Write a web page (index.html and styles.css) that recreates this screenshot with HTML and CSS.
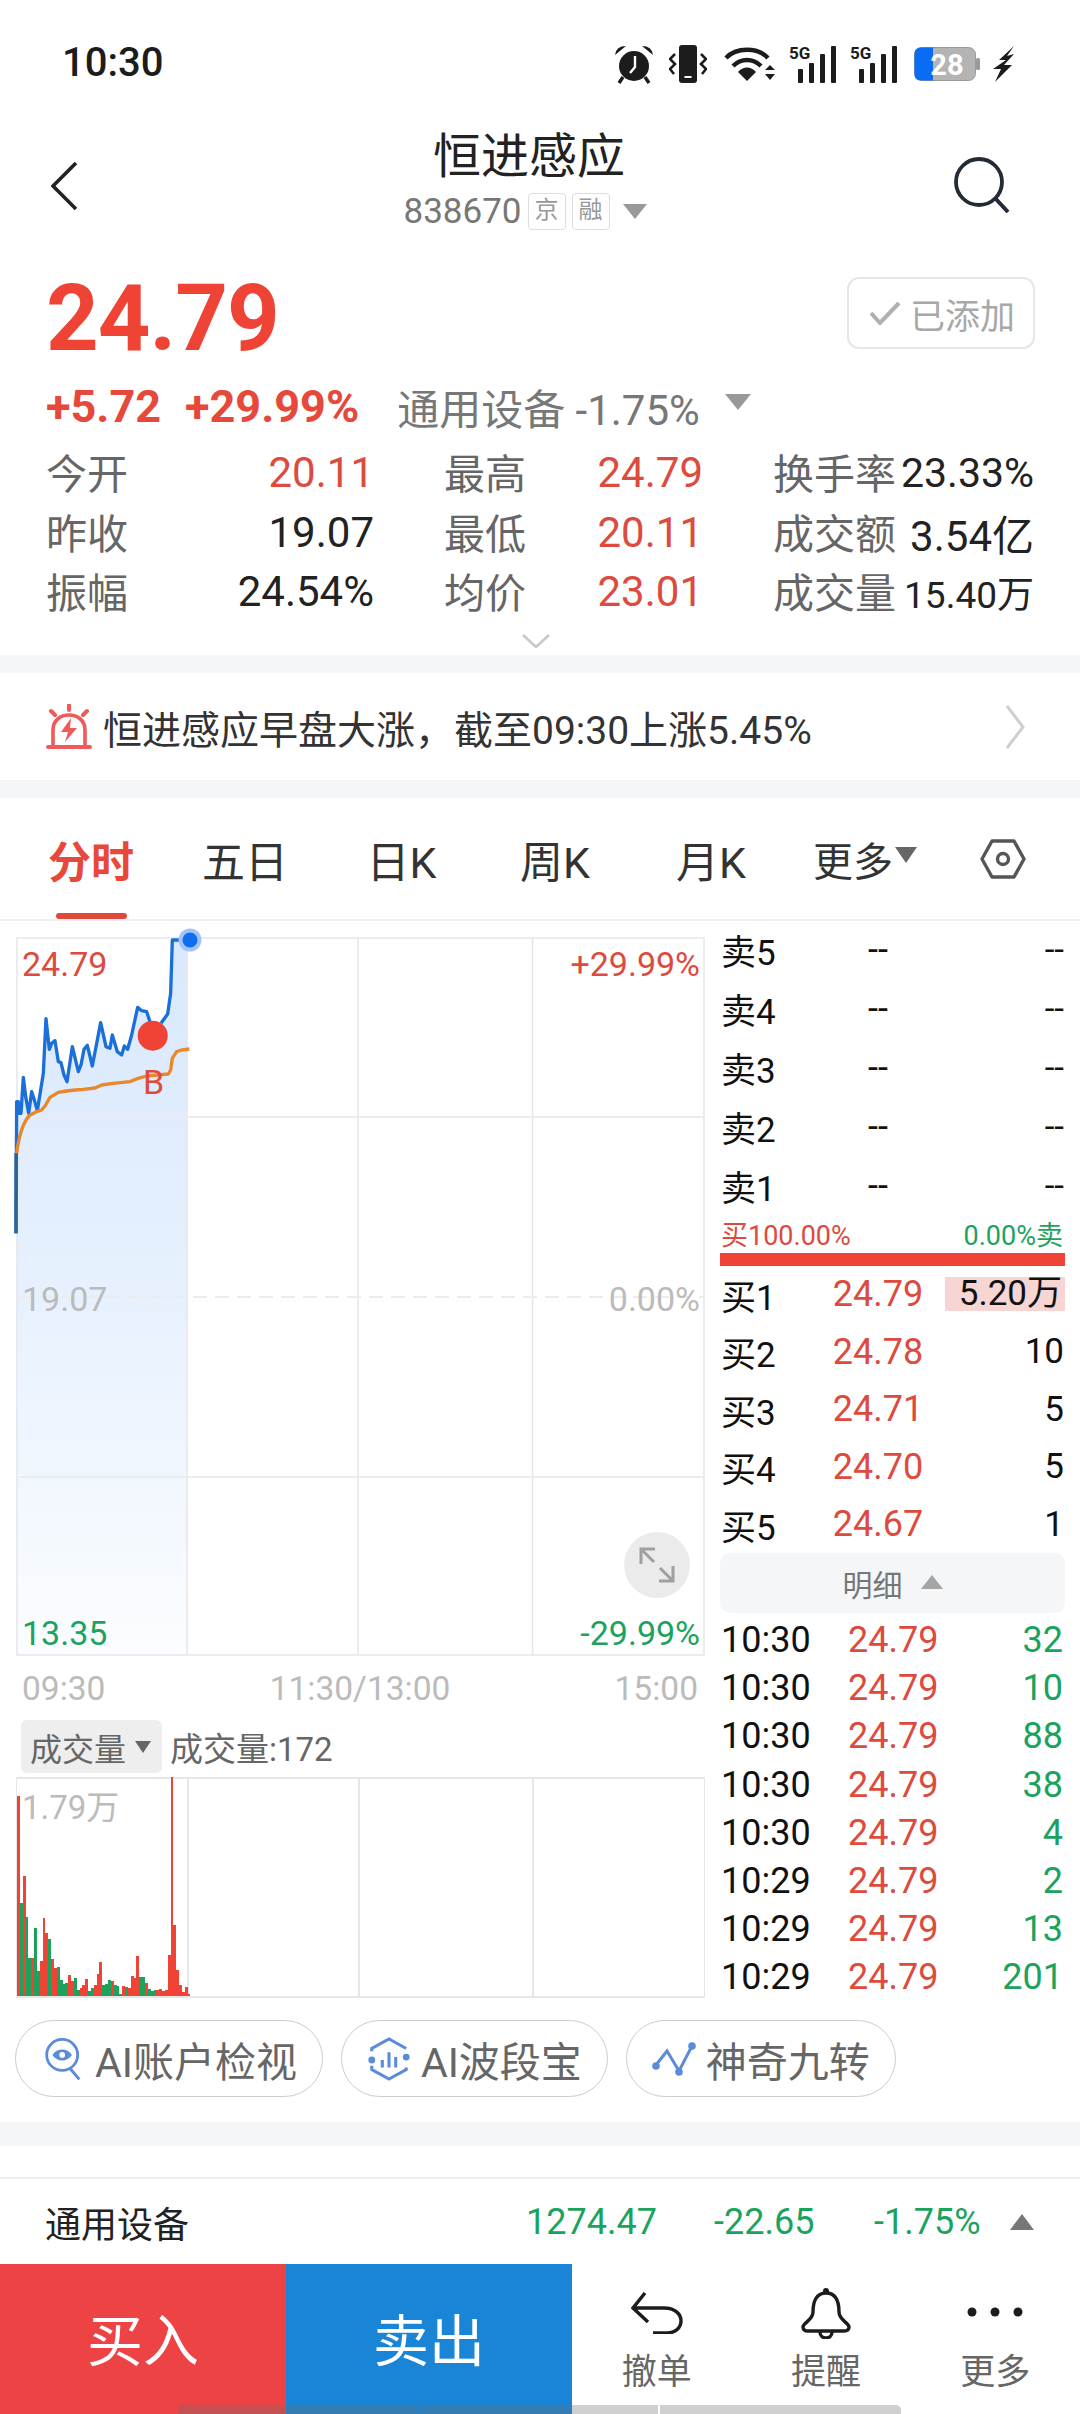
FILE: index.html
```html
<!DOCTYPE html>
<html lang="zh-CN">
<head>
    <meta charset="UTF-8">
    <meta name="viewport" content="width=device-width, initial-scale=1.0">
    <title>恒进感应 838670</title>
    <link rel="stylesheet" href="styles.css">
</head>
<body>
    <div class="page">
        <div class="status-bar">
            <span class="status-time">10:30</span>
            <div class="status-icons">
                <svg class="ic-alarm" viewBox="0 0 40 40"><circle cx="20" cy="22" r="15" fill="#1c1c1c"/><path d="M1 11 Q2 2 12 2 Z M39 11 Q38 2 28 2 Z" fill="#1c1c1c"/><path d="M9 33 L5 39 M31 33 L35 39" stroke="#1c1c1c" stroke-width="3.400"/><path d="M21 12 V23 L16 29" fill="none" stroke="#fff" stroke-width="2.400"/></svg>
                <svg class="ic-vibrate" viewBox="0 0 38 40"><rect x="10" y="1" width="18" height="38" rx="3" fill="#1c1c1c"/><rect x="15.500" y="32" width="7" height="2" fill="#fff"/><path d="M6 10 L1 15 L6 20 L1 25 L5 30 M32 10 L37 15 L32 20 L37 25 L33 30" fill="none" stroke="#1c1c1c" stroke-width="2.600"/></svg>
                <svg class="ic-wifi" viewBox="0 0 52 36"><path d="M2 12 C12 1 34 1 44 12 M9 20 C17 12 29 12 37 20" fill="none" stroke="#1c1c1c" stroke-width="4.400"/><path d="M14 26 C19 20 27 20 32 26 L23 35 Z" fill="#1c1c1c"/><path d="M41 24 L46 19 L51 24 Z M41 28 L51 28 L46 34 Z" fill="#1c1c1c"/></svg>
                <svg class="ic-signal" viewBox="0 0 48 38"><text x="0" y="14" class="ic-5g">5G</text><rect x="9" y="24" width="5" height="14" rx="1"/><rect x="20" y="18" width="5" height="20" rx="1"/><rect x="31" y="9" width="5" height="29" rx="1"/><rect x="42" y="1" width="5" height="37" rx="1"/></svg>
                <svg class="ic-signal" viewBox="0 0 48 38"><text x="0" y="14" class="ic-5g">5G</text><rect x="9" y="24" width="5" height="14" rx="1"/><rect x="20" y="18" width="5" height="20" rx="1"/><rect x="31" y="9" width="5" height="29" rx="1"/><rect x="42" y="1" width="5" height="37" rx="1"/></svg>
                <svg class="ic-battery" viewBox="0 0 66 34"><rect x="0.500" y="0.500" width="61" height="33" rx="7" fill="#b4b4b4" stroke="#999"/><path d="M7 0.500 H19 V33.500 H7 Q0.500 33.500 0.500 27 V7 Q0.500 0.500 7 0.500 Z" fill="#0a6cf5"/><rect x="62" y="11" width="4" height="12" rx="1.500" fill="#999"/><text x="33" y="28" text-anchor="middle" class="ic-batt-num">28</text></svg>
                <svg class="ic-bolt" viewBox="0 0 22 36"><path d="M21 0 L6 14 L13 14 L0 23 L8 23 L2 36 L19 19 L11 19 L21 8 L14 10 Z" fill="#1c1c1c"/></svg>
            </div>
        </div>

        <div class="stock-header">
            <div class="nav-left">
                <svg class="ic-back" viewBox="0 0 26 48"><path d="M25 1 L2 24 L25 47" fill="none" stroke="#222" stroke-width="3.600"/></svg>
            </div>
            <div class="stock-title">
                <div class="stock-name">恒进感应</div>
                <div class="stock-code">
                    <span>838670</span>
                    <span class="code-tag">京</span>
                    <span class="code-tag">融</span>
                    <span class="tri-down tri-code"></span>
                </div>
            </div>
            <div class="nav-right">
                <svg class="ic-search" viewBox="0 0 56 56"><circle cx="25" cy="25" r="23" fill="none" stroke="#222b36" stroke-width="3.800"/><path d="M41 41 L54 55" stroke="#222b36" stroke-width="4"/></svg>
            </div>
        </div>

        <div class="quote">
            <div class="price-row">
                <span class="price">24.79</span>
                <span class="added-btn">
                    <svg class="ic-check" viewBox="0 0 32 24"><path d="M2 12 L11 22 L30 2" fill="none" stroke="#b0b0b0" stroke-width="4"/></svg>
                    已添加
                </span>
            </div>
            <div class="change-row">
                <span class="chg">+5.72</span>
                <span class="chg chg-pct">+29.99%</span>
                <span class="sector">通用设备 -1.75%</span>
                <span class="tri-down tri-sector"></span>
            </div>
            <div class="stats">
                <div class="stat"><span class="stat-label">今开</span><span class="up">20.11</span></div>
                <div class="stat"><span class="stat-label">最高</span><span class="up">24.79</span></div>
                <div class="stat"><span class="stat-label">换手率</span><span class="val-41">23.33%</span></div>
                <div class="stat"><span class="stat-label">昨收</span><span>19.07</span></div>
                <div class="stat"><span class="stat-label">最低</span><span class="up">20.11</span></div>
                <div class="stat"><span class="stat-label">成交额</span><span>3.54亿</span></div>
                <div class="stat"><span class="stat-label">振幅</span><span>24.54%</span></div>
                <div class="stat"><span class="stat-label">均价</span><span class="up">23.01</span></div>
                <div class="stat"><span class="stat-label">成交量</span><span class="val-37">15.40万</span></div>
            </div>
            <div class="expand-row">
                <svg class="ic-expand" viewBox="0 0 28 14"><path d="M1 1 L14 13 L27 1" fill="none" stroke="#c8c8c8" stroke-width="2.600"/></svg>
            </div>
        </div>

        <div class="section-gap"></div>

        <div class="alert">
            <svg class="ic-siren" viewBox="0 0 48 46"><path d="M8 42 V26 C8 6 40 6 40 26 V42" fill="none" stroke="#f05a5a" stroke-width="3.600"/><rect x="1" y="41" width="46" height="4" rx="2" fill="#f05a5a"/><path d="M26 14 L16 28 H23 L20 38 L32 24 H25 Z" fill="#f05a5a"/><path d="M24 1 V6 M6 7 L10 11 M42 7 L38 11" stroke="#f05a5a" stroke-width="4" stroke-linecap="round"/></svg>
            <span class="alert-text">恒进感应早盘大涨，截至09:30上涨5.45%</span>
            <svg class="ic-more" viewBox="0 0 20 46"><path d="M2 2 L18 23 L2 44" fill="none" stroke="#cfcfcf" stroke-width="3"/></svg>
        </div>

        <div class="section-gap"></div>

        <div class="tabs">
            <span class="tab tab-on">分时</span>
            <span class="tab">五日</span>
            <span class="tab">日K</span>
            <span class="tab">周K</span>
            <span class="tab">月K</span>
            <span class="tab tab-more">更多<i class="tri-down tri-tab"></i></span>
            <span class="tab">
                <svg class="ic-hex" viewBox="0 0 46 40"><path d="M12 2 H34 L44 20 L34 38 H12 L2 20 Z" fill="none" stroke="#555" stroke-width="3.400" stroke-linejoin="round"/><circle cx="23" cy="20" r="5.500" fill="none" stroke="#555" stroke-width="3.400"/></svg>
            </span>
        </div>

        <div class="market">
            <div class="market-left">
                <div class="chart">
                    <svg class="chart-svg" viewBox="0 0 689 719">
                        <defs>
                            <linearGradient id="areaFill" x1="0" y1="0" x2="0" y2="1">
                                <stop offset="0" stop-color="#d9e8fd"/>
                                <stop offset="0.500" stop-color="#e7f1fe"/>
                                <stop offset="1" stop-color="#fbfdff"/>
                            </linearGradient>
                        </defs>
                        <g transform="translate(-16,-17) scale(0.3333)">
                            <path fill="url(#areaFill)" d="M50 545 L55 545 58 580 63 580 70 472 77 530 86 580 95 515 103 540 112 572 122 510 130 460 138 296 148 388 155 370 165 362 175 425 183 428 192 465 201 485 217 380 235 455 243 435 252 388 262 376 277 438 302 308 318 380 330 385 337 345 352 395 365 405 373 378 383 388 395 345 413 262 425 272 440 275 450 305 483 310 503 282 512 220 517 60 562 60 562 2208 48 2208 Z"/>
                        </g>
                        <g class="grid">
                            <path d="M1 1 H688 V718 H1 Z" fill="none"/>
                            <path d="M171 1 V718 M342 1 V718 M516.500 1 V718"/>
                            <path class="grid-h" d="M1 180 H688 M1 540 H688"/>
                            <path class="grid-h grid-dash" d="M1 360 H688"/>
                        </g>
                        <g transform="translate(-16,-17) scale(0.3333)" fill="none" stroke-width="10" stroke-linejoin="round">
                            <path stroke="#1a6fd8" d="M48 940 L50 545 55 545 58 580 63 580 70 472 77 530 86 580 95 515 103 540 112 572 122 510 130 460 138 296 148 388 155 370 165 362 175 425 183 428 192 465 201 485 217 380 235 455 243 435 252 388 262 376 277 438 302 308 318 380 330 385 337 345 352 395 365 405 373 378 383 388 395 345 413 262 425 272 440 275 450 305 M483 310 L503 282 512 220 517 60 570 60"/>
                            <path stroke="#2a6499" d="M48 940 V700"/>
                            <path stroke="#e8872b" d="M50 700 C55 660 65 610 90 585 L110 575 125 570 135 558 150 532 175 517 200 513 225 510 250 508 285 504 305 495 340 490 390 485 415 475 440 468 505 462 512 450 517 415 530 395 545 390 568 387"/>
                        </g>
                        <circle cx="174" cy="3" r="11.500" fill="#a3c3fa"/>
                        <circle cx="174" cy="3" r="7.500" fill="#0f6ef0"/>
                        <circle cx="136.700" cy="98.700" r="15" fill="#ee4335"/>
                    </svg>
                    <span class="chart-b">B</span>
                    <span class="axis axis-tl up">24.79</span>
                    <span class="axis axis-tr up">+29.99%</span>
                    <span class="axis axis-ml">19.07</span>
                    <span class="axis axis-mr">0.00%</span>
                    <span class="axis axis-bl down">13.35</span>
                    <span class="axis axis-br down">-29.99%</span>
                    <span class="zoom-btn">
                        <svg viewBox="0 0 36 36"><path d="M2 17 V2 H16 M2 2 L15 15 M34 19 V34 H20 M34 34 L21 21" fill="none" stroke="#a0a0a0" stroke-width="3"/></svg>
                    </span>
                </div>
                <div class="time-axis">
                    <span>09:30</span>
                    <span>11:30/13:00</span>
                    <span>15:00</span>
                </div>
                <div class="vol-head">
                    <span class="vol-select">成交量<i class="tri-down tri-vol"></i></span>
                    <span class="vol-text">成交量:172</span>
                </div>
                <div class="vol-chart">
                    <i class="vol-line vol-line-1"></i>
                    <i class="vol-line vol-line-2"></i>
                    <i class="vol-line vol-line-3"></i>
                    <div class="vol-bars" id="volBars"></div>
                    <span class="vol-max">1.79万</span>
                </div>
            </div>

            <div class="market-right">
                <div class="book-row ask"><span>卖5</span><span class="book-price">--</span><span class="book-qty">--</span></div>
                <div class="book-row ask"><span>卖4</span><span class="book-price">--</span><span class="book-qty">--</span></div>
                <div class="book-row ask"><span>卖3</span><span class="book-price">--</span><span class="book-qty">--</span></div>
                <div class="book-row ask"><span>卖2</span><span class="book-price">--</span><span class="book-qty">--</span></div>
                <div class="book-row ask"><span>卖1</span><span class="book-price">--</span><span class="book-qty">--</span></div>
                <div class="ratio"><span class="up">买100.00%</span><span class="down">0.00%卖</span></div>
                <div class="ratio-bar"></div>
                <div class="book-row bid"><span>买1</span><span class="book-price up">24.79</span><span class="book-qty qty-hot">5.20万</span></div>
                <div class="book-row bid"><span>买2</span><span class="book-price up">24.78</span><span class="book-qty">10</span></div>
                <div class="book-row bid"><span>买3</span><span class="book-price up">24.71</span><span class="book-qty">5</span></div>
                <div class="book-row bid"><span>买4</span><span class="book-price up">24.70</span><span class="book-qty">5</span></div>
                <div class="book-row bid"><span>买5</span><span class="book-price up">24.67</span><span class="book-qty">1</span></div>
                <div class="detail-head">明细<i class="tri-up tri-detail"></i></div>
                <div class="trade"><span>10:30</span><span class="up">24.79</span><span class="down">32</span></div>
                <div class="trade"><span>10:30</span><span class="up">24.79</span><span class="down">10</span></div>
                <div class="trade"><span>10:30</span><span class="up">24.79</span><span class="down">88</span></div>
                <div class="trade"><span>10:30</span><span class="up">24.79</span><span class="down">38</span></div>
                <div class="trade"><span>10:30</span><span class="up">24.79</span><span class="down">4</span></div>
                <div class="trade"><span>10:29</span><span class="up">24.79</span><span class="down">2</span></div>
                <div class="trade"><span>10:29</span><span class="up">24.79</span><span class="down">13</span></div>
                <div class="trade"><span>10:29</span><span class="up">24.79</span><span class="down">201</span></div>
            </div>
        </div>

        <div class="pills">
            <span class="pill">
                <svg class="pill-icon" viewBox="0 0 44 54"><circle cx="21" cy="22" r="19" fill="none" stroke="#5b8bd9" stroke-width="3.400"/><path d="M9 22 C15 13 27 13 33 22 C27 31 15 31 9 22 Z" fill="#5b8bd9"/><circle cx="21" cy="22" r="3.500" fill="#fff"/><path d="M31 39 L42 52" stroke="#5b8bd9" stroke-width="3.600"/></svg>
                AI账户检视
            </span>
            <span class="pill">
                <svg class="pill-icon" viewBox="0 0 44 46"><path d="M4 15 V12 L22 2 L40 12 M40 32 V34 L22 44 L4 34 V30" fill="none" stroke="#5b8bd9" stroke-width="3.200"/><circle cx="40" cy="21" r="3.600" fill="#5b8bd9"/><circle cx="4" cy="24" r="3.600" fill="#5b8bd9"/><path d="M15 24 V32 M22 16 V32 M29 21 V32" stroke="#5b8bd9" stroke-width="3.200"/></svg>
                AI波段宝
            </span>
            <span class="pill">
                <svg class="pill-icon" viewBox="0 0 44 40"><path d="M4 26 L15 12 L27 32 L40 7" fill="none" stroke="#5b8bd9" stroke-width="3"/><circle cx="4" cy="27" r="3.800" fill="#5b8bd9"/><circle cx="27" cy="33" r="3.800" fill="#5b8bd9"/><circle cx="40" cy="7" r="3.800" fill="#5b8bd9"/></svg>
                神奇九转
            </span>
        </div>

        <div class="section-gap gap-wide"></div>

        <div class="sector-row">
            <span class="sector-name">通用设备</span>
            <span class="sector-num">1274.47</span>
            <span class="sector-num">-22.65</span>
            <span class="sector-num">-1.75%</span>
            <i class="tri-up tri-sector-up"></i>
        </div>

        <div class="action-bar">
            <span class="trade-btn buy-btn">买入</span>
            <span class="trade-btn sell-btn">卖出</span>
            <div class="tool">
                <svg class="ic-undo" viewBox="0 0 52 42"><path d="M14 1 L2 16 L17 30 M2 16 H33 C44 16 50 22 50 29 C50 36 44 41 36 41 H22" fill="none" stroke="#1c1c1c" stroke-width="3.400"/></svg>
                <span>撤单</span>
            </div>
            <div class="tool">
                <svg class="ic-bell" viewBox="0 0 50 52"><path d="M25 6 C35 6 38 15 38 25 C38 33 48 36 48 40 C48 43 46 44 43 44 H7 C4 44 2 43 2 40 C2 36 12 33 12 25 C12 15 15 6 25 6 Z" fill="none" stroke="#1c1c1c" stroke-width="3.400"/><circle cx="25" cy="4" r="3" fill="#1c1c1c"/><path d="M19 45 C19 53 31 53 31 45" fill="none" stroke="#1c1c1c" stroke-width="3.400"/></svg>
                <span>提醒</span>
            </div>
            <div class="tool">
                <svg class="ic-dots" viewBox="0 0 56 10"><circle cx="5" cy="5" r="4.500"/><circle cx="28" cy="5" r="4.500"/><circle cx="51" cy="5" r="4.500"/></svg>
                <span>更多</span>
            </div>
        </div>

        <div class="gesture-bar">
            <i class="gesture-part gesture-a"></i>
            <i class="gesture-part gesture-b"></i>
            <i class="gesture-part gesture-c"></i>
        </div>
    </div>

    <script src="script.js"></script>
</body>
</html>
```
FILE: styles.css
```css
* {
    margin: 0;
    padding: 0;
    box-sizing: border-box;
}

body {
    background: #fff;
    font-family: Roboto, "Noto Sans CJK SC", sans-serif;
    color: #222;
}

i {
    font-style: normal;
}

svg {
    display: block;
    flex: none;
}

.page {
    position: relative;
    width: 1080px;
    height: 2414px;
    overflow: hidden;
    background: #fff;
}

.up {
    color: #dd4a3e;
}

.down {
    color: #1ba35e;
}

.tri-down,
.tri-up {
    display: inline-block;
    width: 0;
    height: 0;
    border-style: solid;
    border-color: transparent;
}

.section-gap {
    height: 18px;
    background: #f5f6f8;
}

.gap-wide {
    height: 24px;
}

/* status bar */
.status-bar {
    height: 124px;
    padding: 0 64px 0 62px;
    display: flex;
    align-items: center;
    justify-content: space-between;
}

.status-time {
    font-size: 40px;
    font-weight: 500;
    color: #1c1c1c;
}

.status-icons {
    display: flex;
    align-items: center;
    margin-top: 3px;
    margin-right: 1px;
}

.ic-alarm {
    width: 40px;
    height: 40px;
}

.ic-vibrate {
    width: 38px;
    height: 40px;
    margin-left: 15px;
}

.ic-wifi {
    width: 52px;
    height: 36px;
    margin-left: 17px;
}

.ic-signal {
    width: 48px;
    height: 38px;
    margin-left: 13px;
    fill: #1c1c1c;
    overflow: visible;
}

.ic-5g {
    font-size: 17px;
    font-weight: 700;
}

.ic-battery {
    width: 66px;
    height: 34px;
    margin-left: 16px;
    overflow: visible;
}

.ic-batt-num {
    font-size: 29px;
    font-weight: 700;
    fill: #fff;
}

.ic-bolt {
    width: 22px;
    height: 36px;
    margin-left: 13px;
}

/* title */
.stock-header {
    height: 116px;
    display: grid;
    grid-template-columns: 178px 1fr 200px;
    align-items: center;
}

.nav-left {
    padding: 8px 0 0 51px;
}

.nav-right {
    display: flex;
    justify-content: flex-end;
    padding: 6px 70px 0 0;
}

.ic-back {
    width: 26px;
    height: 48px;
}

.ic-search {
    width: 56px;
    height: 56px;
}

.stock-title {
    text-align: center;
}

.stock-name {
    font-size: 48px;
    line-height: 58px;
    margin-top: -5px;
}

.stock-code {
    display: flex;
    align-items: center;
    justify-content: center;
    height: 40px;
    margin-top: 5px;
    margin-left: -8px;
    font-size: 35px;
    color: #777;
}

.code-tag {
    width: 38px;
    height: 37px;
    margin-left: 6px;
    border: 1.5px solid #ddd;
    border-radius: 4px;
    font-size: 24px;
    line-height: 33px;
    color: #999;
    text-align: center;
}

.tri-code {
    margin-left: 13px;
    border-width: 15px 12px 0;
    border-top-color: #999;
}

/* quote */
.quote {
    padding: 37px 45px 0 46px;
    height: 415px;
}

.price-row {
    height: 72px;
    display: flex;
    align-items: center;
    justify-content: space-between;
}

.price {
    padding-top: 12px;
    font-size: 92px;
    font-weight: 700;
    line-height: 72px;
    color: #ee4335;
    letter-spacing: -1px;
}

.added-btn {
    width: 188px;
    height: 72px;
    border: 2px solid #e6e6e6;
    border-radius: 12px;
    display: flex;
    align-items: center;
    padding-left: 20px;
    font-size: 35px;
    color: #a8a8a8;
}

.ic-check {
    width: 32px;
    height: 24px;
    margin-right: 9px;
}

.change-row {
    height: 60px;
    margin-top: 27px;
    display: flex;
    align-items: center;
}

.chg {
    font-size: 45px;
    font-weight: 700;
    color: #e6483b;
}

.chg-pct {
    margin-left: 24px;
}

.sector {
    margin-left: 38px;
    font-size: 42px;
    color: #777;
}

.tri-sector {
    margin-left: 25px;
    margin-top: -8px;
    border-width: 16px 13px 0;
    border-top-color: #999;
}

.stats {
    margin-top: 7px;
    display: grid;
    grid-template-columns: 328px 259px 261px;
    column-gap: 70px;
    grid-auto-rows: 59.500px;
}

.stat {
    display: flex;
    align-items: center;
    justify-content: space-between;
    font-size: 42px;
    white-space: nowrap;
}

.stat-label {
    margin-top: -3px;
    color: #666;
    font-size: 41px;
}

.val-41 {
    font-size: 41px;
}

.val-37 {
    font-size: 37px;
}

.expand-row {
    display: flex;
    justify-content: center;
    margin-top: 12px;
    margin-left: -10px;
}

.ic-expand {
    width: 28px;
    height: 14px;
}

/* alert */
.alert {
    height: 107px;
    display: flex;
    align-items: center;
    padding: 0 55px 0 45px;
}

.ic-siren {
    width: 48px;
    height: 46px;
}

.alert-text {
    margin-left: 10px;
    font-size: 39px;
    white-space: nowrap;
    color: #333;
}

.ic-more {
    width: 20px;
    height: 46px;
    margin-left: auto;
}

/* tabs */
.tabs {
    height: 123px;
    display: grid;
    grid-template-columns: 150px 158px 155px 152px 160px 148px 128px;
    padding-left: 16px;
    border-bottom: 2px solid #eee;
    align-items: center;
}

.tab {
    display: flex;
    align-items: center;
    justify-content: center;
    font-size: 43px;
    color: #333;
}

.tab-more {
    font-size: 40px;
}

.tab-on {
    position: relative;
    height: 100%;
    font-weight: 700;
    color: #e8483a;
}

.tab-on::after {
    content: "";
    position: absolute;
    left: 40px;
    bottom: 0;
    width: 71px;
    height: 6px;
    border-radius: 3px;
    background: #e0483c;
}

.tri-tab {
    margin-left: 2px;
    margin-top: -8px;
    border-width: 16px 11px 0;
    border-top-color: #666;
}

.ic-hex {
    width: 46px;
    height: 40px;
}

/* chart and order book */
.market {
    height: 1099px;
    display: flex;
}

.market-left {
    width: 720px;
    padding: 16px 0 0 16px;
}

.chart {
    position: relative;
    width: 689px;
    height: 719px;
}

.chart-svg {
    width: 689px;
    height: 719px;
    overflow: visible;
}

.grid {
    stroke: #e6e6ea;
    stroke-width: 1.500;
}

.grid-h {
    stroke: #ececf0;
    stroke-width: 2;
}

.grid-dash {
    stroke-dasharray: 14 8;
}

.chart-b {
    position: absolute;
    left: 127px;
    top: 125px;
    font-size: 34px;
    line-height: 40px;
    color: #dd4a3e;
}

.axis {
    position: absolute;
    font-size: 34px;
    line-height: 40px;
}

.axis-tl {
    left: 6px;
    top: 7px;
}

.axis-tr {
    right: 5px;
    top: 7px;
}

.axis-ml {
    left: 6px;
    top: 342px;
    color: #bbb;
}

.axis-mr {
    right: 5px;
    top: 342px;
    color: #bbb;
}

.axis-bl {
    left: 6px;
    top: 676px;
}

.axis-br {
    right: 5px;
    top: 676px;
}

.zoom-btn {
    position: absolute;
    left: 608px;
    top: 595px;
    width: 66px;
    height: 66px;
    border-radius: 50%;
    background: #ebebeb;
    display: flex;
    align-items: center;
    justify-content: center;
}

.zoom-btn svg {
    width: 36px;
    height: 36px;
}

.time-axis {
    height: 64px;
    padding: 0 7px 0 6px;
    width: 689px;
    display: flex;
    align-items: center;
    justify-content: space-between;
    font-size: 33.500px;
    color: #bbb;
}

.vol-head {
    height: 53px;
    display: flex;
    align-items: center;
}

.vol-select {
    width: 141px;
    height: 53px;
    margin-left: 5px;
    padding-left: 9px;
    display: flex;
    align-items: center;
    background: #eee;
    border-radius: 6px;
    font-size: 32px;
    color: #666;
}

.tri-vol {
    margin-left: 9px;
    border-width: 12px 8px 0;
    border-top-color: #666;
}

.vol-text {
    margin-left: 8px;
    font-size: 33px;
    color: #666;
}

.vol-chart {
    position: relative;
    width: 689px;
    height: 221px;
    margin-top: 4px;
    border: 1.500px solid #e6e6ea;
    border-width: 2px 1.500px;
}

.vol-line {
    position: absolute;
    top: 0;
    bottom: 0;
    width: 1.500px;
    background: #e6e6ea;
}

.vol-line-1 {
    left: 170px;
}

.vol-line-2 {
    left: 341px;
}

.vol-line-3 {
    left: 515px;
}

.vol-max {
    position: absolute;
    left: 5px;
    top: 9px;
    font-size: 33px;
    line-height: 40px;
    color: #bbb;
}

.vol-bars {
    position: absolute;
    left: 0;
    bottom: 0;
    display: flex;
    align-items: flex-end;
}

.vol-bar {
    width: 2.850px;
    flex: none;
}

.bar-up {
    background: #ee4335;
}

.bar-down {
    background: #1ba35e;
}

.market-right {
    width: 345px;
    margin-top: -1px;
    color: #111;
}

.book-row {
    display: grid;
    grid-template-columns: 88px 140px 1fr;
    align-items: center;
    font-size: 35px;
}

.book-row > :first-child {
    padding-left: 1px;
}

.ask {
    height: 59px;
}

.bid {
    height: 57.500px;
}

.book-price {
    text-align: center;
    font-size: 36px;
}

.book-qty {
    text-align: right;
    font-size: 35px;
    padding-right: 1px;
}

.qty-hot {
    height: 34px;
    line-height: 34px;
    background: #f6d5d3;
    padding-right: 3px;
    margin-left: -3px;
}

.ratio {
    height: 37.500px;
    padding: 0 2px 0 1px;
    display: flex;
    align-items: center;
    justify-content: space-between;
    font-size: 27px;
}

.ratio-bar {
    height: 13px;
    background: #ee4335;
}

.detail-head {
    height: 60px;
    margin-bottom: 3px;
    border-radius: 10px;
    background: #f5f6f8;
    display: flex;
    align-items: center;
    justify-content: center;
    font-size: 30px;
    color: #777;
}

.tri-detail {
    margin-left: 18px;
    margin-top: -2px;
    border-width: 0 11px 14px;
    border-bottom-color: #a5a5a5;
}

.trade {
    height: 48.200px;
    display: grid;
    grid-template-columns: 127px 1fr auto;
    align-items: center;
    padding: 0 2px 0 1px;
    font-size: 36px;
}

/* feature pills */
.pills {
    height: 102px;
    padding-left: 15px;
    display: flex;
    align-items: flex-start;
    gap: 18px;
}

.pill {
    height: 77px;
    display: flex;
    align-items: center;
    gap: 10px;
    padding: 0 25px;
    border: 1.500px solid #ccc;
    border-radius: 39px;
    font-size: 41px;
    color: #666;
    white-space: nowrap;
}

.pill-icon {
    width: 44px;
    height: 44px;
}

.sector-row {
    margin-top: 31px;
    height: 87px;
    padding-left: 45px;
    border-top: 2px solid #eee;
    display: grid;
    grid-template-columns: 481px 188px 160px 136px 1fr;
    align-items: center;
    font-size: 36px;
}

.sector-name {
    color: #222;
}

.sector-num {
    color: #1ba35e;
}

.tri-sector-up {
    border-width: 0 12px 16px;
    border-bottom-color: #777;
}

/* bottom actions */
.action-bar {
    height: 150px;
    display: flex;
}

.trade-btn {
    width: 286px;
    display: flex;
    align-items: center;
    justify-content: center;
    padding-bottom: 6px;
    font-size: 56px;
    color: #fff;
}

.buy-btn {
    background: #ee4344;
}

.sell-btn {
    background: #1a85d6;
}

.tool {
    flex: 1;
    height: 150px;
    padding-bottom: 21px;
    display: flex;
    flex-direction: column;
    align-items: center;
    font-size: 35px;
    line-height: 40px;
    color: #666;
}

.tool span {
    margin-top: auto;
}

.ic-undo {
    width: 52px;
    height: 42px;
    margin-top: 28px;
}

.ic-bell {
    width: 50px;
    height: 52px;
    margin-top: 23px;
}

.ic-dots {
    width: 56px;
    height: 10px;
    margin-top: 43px;
    fill: #1c1c1c;
}

/* gesture hint sits over the action bar */
.gesture-bar {
    position: absolute;
    left: 178px;
    bottom: 0;
    width: 723px;
    height: 9px;
    display: flex;
    gap: 2px;
}

.gesture-part {
    background: rgba(110, 110, 110, 0.32);
}

.gesture-a {
    width: 240px;
    border-radius: 5px 0 0 0;
}

.gesture-b {
    width: 238px;
}

.gesture-c {
    flex: 1;
    border-radius: 0 5px 0 0;
}
```
FILE: script.js
```js
// volume bars of the morning session: [height px, 1 = up, 0 = down]
const volData = [
    [200, 1], [93, 0], [120, 1], [79, 0], [38, 0], [38, 1], [68, 0], [25, 0], [35, 1], [78, 1],
    [63, 1], [57, 0], [37, 1], [28, 1], [29, 0], [16, 0], [12, 0], [13, 0], [21, 1], [15, 1],
    [18, 0], [6, 0], [8, 1], [11, 1], [17, 1], [5, 0], [8, 0], [11, 1], [22, 1], [34, 1],
    [11, 0], [12, 0], [16, 0], [15, 1], [11, 0], [10, 0], [2, 0], [10, 1], [9, 0], [8, 1],
    [20, 1], [18, 1], [40, 1], [19, 0], [19, 0], [13, 1], [7, 0], [5, 0], [6, 0], [6, 1],
    [7, 1], [5, 1], [6, 1], [41, 1], [219, 1], [71, 1], [26, 1], [11, 1], [4, 1], [9, 1], [2, 1]
];

const volBars = document.getElementById('volBars');

volBars.innerHTML = volData.map(([h, isUp]) =>
    `<i class="vol-bar ${isUp ? 'bar-up' : 'bar-down'}" style="height:${h}px"></i>`
).join('');
```
